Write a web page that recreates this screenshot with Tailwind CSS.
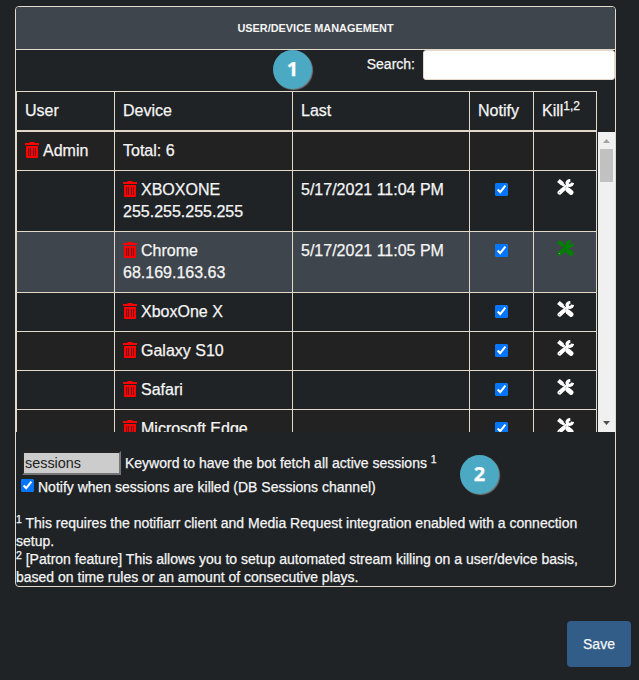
<!DOCTYPE html>
<html lang="en">
<head>
<meta charset="utf-8">
<title>User/Device Management</title>
<script src="https://cdn.jsdelivr.net/npm/@tailwindcss/browser@4"></script>
</head>
<body class="relative h-[680px] w-[639px] overflow-hidden bg-[#1f2326] font-['Liberation_Sans',Arial,sans-serif] text-[14px] leading-[18px] text-[#f5f5f5] [-webkit-text-stroke:0.25px_currentColor]">
<svg class="hidden">
  <symbol id="trash" viewBox="0 0 14 16">
    <path fill="#f00" d="M4.500 0h5v1H14v2H0V1h4.500zM1 4h12v11q0 1-1 1H2q-1 0-1-1z"/>
    <path fill="#701015" d="M3 6h1.200v8H3zM5 6h1v8H5zM8 6h1v8H8zM10 6h1v8h-1z"/>
  </symbol>
  <symbol id="tools" viewBox="0 0 17 16">
    <g fill="none" stroke="currentColor">
      <path stroke-width="4" d="M1.400 1.500l4.200 3.600"/>
      <path stroke-width="2.600" d="M4 3.500l6.500 6.500"/>
      <path stroke-width="5" stroke-linecap="round" d="M11 10.800l3 2.600"/>
      <path stroke-width="4.200" stroke-linecap="round" d="M2.600 13.600l4-3.600"/>
      <path stroke-width="3" d="M6.500 10l5-4.500"/>
      <path stroke-width="3.200" d="M13.300 1.500c-2.800.1-3.900 2.300-2.700 3.900 1.300 1.700 4.600 1.200 5-1.700"/>
    </g>
    <path fill="none" stroke="#1f2326" stroke-width=".6" d="M5.500 8.300l2-1.700M8 9.300l1.600-1.500" opacity=".6"/>
    <circle cx="2.400" cy="13.600" r=".7" fill="#999"/>
  </symbol>
</svg>
<main class="flex flex-col">
  <section class="ml-[15px] mt-[6px] flex h-[581px] w-[601px] flex-col rounded-[4px] border border-[#e3d9cb]">
    <h1 class="flex h-[43px] shrink-0 items-center justify-center rounded-t-[3px] border-b border-[#e3d9cb] bg-[#3f454c] text-[10.9px] font-bold [-webkit-text-stroke:0px]">USER/DEVICE MANAGEMENT</h1>
    <div class="flex h-[41px] shrink-0 items-start justify-end">
      <label for="search" class="mr-2 mt-[5px]">Search:</label>
      <input id="search" class="h-[30px] w-[192px] rounded-[3px] border border-[#e3d9cb] bg-white">
    </div>
    <div class="grid h-[41px] w-[581px] shrink-0 grid-cols-[98px_178px_177px_64px_63px] border-b-2 border-l border-t border-[#e3d9cb] text-[16px] leading-[22px] *:border-r *:border-[#e3d9cb] *:px-2 *:pt-2">
      <div>User</div><div>Device</div><div>Last</div><div>Notify</div><div>Kill<sup class="text-[12px]">1,2</sup></div>
    </div>
    <div class="flex h-[300px] shrink-0 overflow-hidden">
      <div class="w-[581px] shrink-0 border-l border-[#e3d9cb] text-[16px] leading-[22px]">
        <div class="grid h-[39px] grid-cols-[98px_178px_177px_64px_63px] border-b border-[#e3d9cb] bg-[#222] *:border-r *:border-[#e3d9cb] *:px-2 *:pt-2">
          <div class="flex gap-[4px]"><svg class="mt-[2px] h-4 w-[14px]"><use href="#trash"/></svg>Admin</div><div>Total: 6</div><div></div><div></div><div></div>
        </div>
        <div class="grid h-[61px] grid-cols-[98px_178px_177px_64px_63px] border-b border-[#e3d9cb] bg-[#1f2326] *:border-r *:border-[#e3d9cb] *:px-2 *:pt-2">
          <div></div><div><div class="flex gap-[4px]"><svg class="mt-[2px] h-4 w-[14px]"><use href="#trash"/></svg>XBOXONE</div>255.255.255.255</div><div>5/17/2021 11:04 PM</div>
          <div class="flex items-start justify-center"><input type="checkbox" checked class="mt-[4px] h-[13px] w-[13px]"></div>
          <div class="flex items-start justify-center text-white"><svg class="h-4 w-[17px]"><use href="#tools"/></svg></div>
        </div>
        <div class="grid h-[61px] grid-cols-[98px_178px_177px_64px_63px] border-b border-[#e3d9cb] bg-[#3f454c] *:border-r *:border-[#e3d9cb] *:px-2 *:pt-2">
          <div></div><div><div class="flex gap-[4px]"><svg class="mt-[2px] h-4 w-[14px]"><use href="#trash"/></svg>Chrome</div>68.169.163.63</div><div>5/17/2021 11:05 PM</div>
          <div class="flex items-start justify-center"><input type="checkbox" checked class="mt-[4px] h-[13px] w-[13px]"></div>
          <div class="flex items-start justify-center text-[#008000]"><svg class="h-4 w-[17px]"><use href="#tools"/></svg></div>
        </div>
        <div class="grid h-[39px] grid-cols-[98px_178px_177px_64px_63px] border-b border-[#e3d9cb] bg-[#1f2326] *:border-r *:border-[#e3d9cb] *:px-2 *:pt-2">
          <div></div><div class="flex gap-[4px]"><svg class="mt-[2px] h-4 w-[14px]"><use href="#trash"/></svg>XboxOne X</div><div></div>
          <div class="flex items-start justify-center"><input type="checkbox" checked class="mt-[4px] h-[13px] w-[13px]"></div>
          <div class="flex items-start justify-center text-white"><svg class="h-4 w-[17px]"><use href="#tools"/></svg></div>
        </div>
        <div class="grid h-[39px] grid-cols-[98px_178px_177px_64px_63px] border-b border-[#e3d9cb] bg-[#222] *:border-r *:border-[#e3d9cb] *:px-2 *:pt-2">
          <div></div><div class="flex gap-[4px]"><svg class="mt-[2px] h-4 w-[14px]"><use href="#trash"/></svg>Galaxy S10</div><div></div>
          <div class="flex items-start justify-center"><input type="checkbox" checked class="mt-[4px] h-[13px] w-[13px]"></div>
          <div class="flex items-start justify-center text-white"><svg class="h-4 w-[17px]"><use href="#tools"/></svg></div>
        </div>
        <div class="grid h-[39px] grid-cols-[98px_178px_177px_64px_63px] border-b border-[#e3d9cb] bg-[#1f2326] *:border-r *:border-[#e3d9cb] *:px-2 *:pt-2">
          <div></div><div class="flex gap-[4px]"><svg class="mt-[2px] h-4 w-[14px]"><use href="#trash"/></svg>Safari</div><div></div>
          <div class="flex items-start justify-center"><input type="checkbox" checked class="mt-[4px] h-[13px] w-[13px]"></div>
          <div class="flex items-start justify-center text-white"><svg class="h-4 w-[17px]"><use href="#tools"/></svg></div>
        </div>
        <div class="grid h-[39px] grid-cols-[98px_178px_177px_64px_63px] border-b border-[#e3d9cb] bg-[#222] *:border-r *:border-[#e3d9cb] *:px-2 *:pt-2">
          <div></div><div class="flex gap-[4px]"><svg class="mt-[2px] h-4 w-[14px]"><use href="#trash"/></svg>Microsoft Edge</div><div></div>
          <div class="flex items-start justify-center"><input type="checkbox" checked class="mt-[4px] h-[13px] w-[13px]"></div>
          <div class="flex items-start justify-center text-white"><svg class="h-4 w-[17px]"><use href="#tools"/></svg></div>
        </div>
      </div>
      <div class="ml-px flex h-[300px] w-[17px] flex-col items-center bg-[#f0f0f0]">
        <svg class="h-[17px] w-[17px] shrink-0" viewBox="0 0 17 17"><path fill="#a3a3a3" d="M5 11l3.500-4 3.500 4z"/></svg>
        <div class="h-[33px] w-[13px] bg-[#c1c1c1]"></div>
        <svg class="mt-auto h-[17px] w-[17px] shrink-0" viewBox="0 0 17 17"><path fill="#505050" d="M5 6l3.500 4L12 6z"/></svg>
      </div>
    </div>
    <div class="ml-[6px] mt-[19px] flex h-[24px] shrink-0 items-center">
      <input value="sessions" class="h-[24px] w-[99px] border-2 border-b-[#767676] border-l-[#252525] border-r-[#767676] border-t-[#252525] bg-[#ccc] pl-px text-[14.4px] text-[#222] [-webkit-text-stroke:0px]">
      <span class="ml-1">Keyword to have the bot fetch all active sessions <sup class="text-[10.5px]">1</sup></span>
    </div>
    <label class="ml-[5px] mt-[3px] flex h-[18px] shrink-0 items-start gap-1"><input type="checkbox" checked class="mt-px h-[13px] w-[13px]">Notify when sessions are killed (DB Sessions channel)</label>
    <div class="mt-[18px] whitespace-nowrap">
      <p><sup class="text-[10.5px]">1</sup> This requires the notifiarr client and Media Request integration enabled with a connection<br>setup.</p>
      <p><sup class="text-[10.5px]">2</sup> [Patron feature] This allows you to setup automated stream killing on a user/device basis,<br>based on time rules or an amount of consecutive plays.</p>
    </div>
  </section>
  <button class="ml-[567px] mt-[34px] h-[46px] w-16 rounded-[4px] bg-[#325d88] text-[14px]">Save</button>
</main>
<div class="absolute left-[273px] top-[50px] flex h-[39px] w-[39px] items-center justify-center rounded-full bg-[#4ba9c3] pb-[2px] font-['Open_Sans',sans-serif] text-[20px] font-bold text-white shadow-[1px_1px_1px_#777]">1</div>
<div class="absolute left-[460px] top-[455px] flex h-[39px] w-[39px] items-center justify-center rounded-full bg-[#4ba9c3] pb-[2px] font-['Open_Sans',sans-serif] text-[20px] font-bold text-white shadow-[1px_1px_1px_#777]">2</div>
</body>
</html>
